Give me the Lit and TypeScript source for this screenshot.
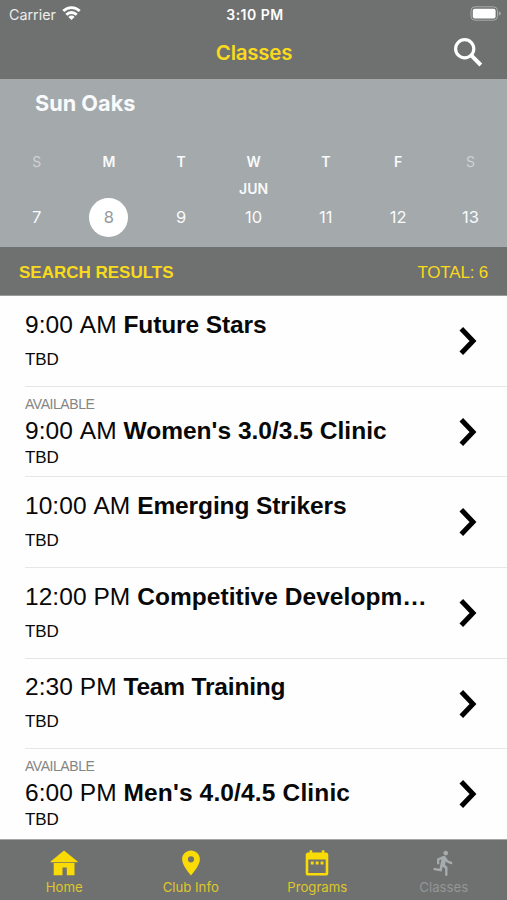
import { LitElement, html, css, svg, nothing } from "lit";
import { customElement, property } from "lit/decorators.js";
import { classMap } from "lit/directives/class-map.js";
import { styleMap } from "lit/directives/style-map.js";

interface Session {
  time: string;
  name: string;
  place: string;
  tracking: number;
  available?: boolean;
}

const WEEK = [
  { letter: "S", date: 7, weekend: true },
  { letter: "M", date: 8, selected: true },
  { letter: "T", date: 9 },
  { letter: "W", date: 10, month: "JUN" },
  { letter: "T", date: 11 },
  { letter: "F", date: 12 },
  { letter: "S", date: 13, weekend: true },
];

const SESSIONS: Session[] = [
  { time: "9:00 AM", name: "Future Stars", place: "TBD", tracking: -0.1 },
  { time: "9:00 AM", name: "Women's 3.0/3.5 Clinic", place: "TBD", tracking: 0.02, available: true },
  { time: "10:00 AM", name: "Emerging Strikers", place: "TBD", tracking: -0.1 },
  { time: "12:00 PM", name: "Competitive Developm…", place: "TBD", tracking: 0.05 },
  { time: "2:30 PM", name: "Team Training", place: "TBD", tracking: -0.18 },
  { time: "6:00 PM", name: "Men's 4.0/4.5 Clinic", place: "TBD", tracking: 0.15, available: true },
];

const TABS = [
  {
    label: "Home",
    box: "0 0 28 28",
    icon: svg`<path d="M14 1.500 27.600 12.600v.7H.6v-.7z"/><path d="M3.700 14h20.800v12.200h-7.700V18.500h-4.300v7.700H3.700z"/>`,
  },
  {
    label: "Club Info",
    box: "0.700 0.700 22.600 22.600",
    icon: svg`<path d="M12 2C8.130 2 4.800 5.130 4.800 9c0 5.250 7.200 13 7.200 13s7.200-7.750 7.200-13c0-3.870-3.330-7-7.200-7zm0 9.500a2.500 2.500 0 110-5 2.500 2.500 0 010 5z"/>`,
  },
  {
    label: "Programs",
    box: "0 0 28 28",
    icon: svg`<path fill-rule="evenodd" d="M6.600 1.200h2.600v2.200h9.600V1.200h2.600v2.200h1.300a2.600 2.600 0 0 1 2.600 2.600v17.900a2.600 2.600 0 0 1-2.600 2.600H5.300a2.600 2.600 0 0 1-2.600-2.600V6a2.600 2.600 0 0 1 2.600-2.600h1.300zM5.300 10.500V24h17.400V10.500z"/><path d="M7.800 12.500h2.900v2.900H7.800zM12.700 12.500h2.900v2.900h-2.900zM17.600 12.500h2.900v2.900h-2.900z"/>`,
  },
  {
    label: "Classes",
    box: "0 0 24 24",
    current: true,
    icon: svg`<path d="M13.490 5.480c1.100 0 2-.9 2-2s-.9-2-2-2-2 .9-2 2 .9 2 2 2zm-3.600 13.900l1-4.400 2.100 2v6h2v-7.500l-2.100-2 .6-3c1.300 1.500 3.300 2.500 5.500 2.500v-2c-1.900 0-3.500-1-4.300-2.400l-1-1.600c-.4-.6-1-1-1.700-1-.3 0-.5.1-.8.1l-5.200 2.200v4.700h2v-3.400l1.800-.7-1.600 8.100-4.900-1-.4 2 7 1.400z"/>`,
  },
];

@customElement("class-row")
class ClassRow extends LitElement {
  @property({ attribute: false }) session!: Session;

  static styles = css`
    :host {
      display: flex;
      align-items: center;
      flex: 1 1 0;
      min-height: 0;
      box-sizing: border-box;
      padding-left: 25px;
      padding-right: 29px;
      color: #080808;
      white-space: nowrap;
    }
    .text {
      flex: 1;
      align-self: stretch;
      padding-top: 13.500px;
    }
    .text.tagged {
      padding-top: 9px;
    }
    .tag {
      font-size: 14px;
      line-height: 17px;
      letter-spacing: -0.450px;
      color: #858585;
    }
    .title {
      font-size: 24.500px;
      line-height: 30px;
    }
    .time {
      font-kerning: none;
      letter-spacing: 0.050px;
    }
    .tagged .title {
      line-height: 36px;
    }
    .place {
      font-size: 17px;
      line-height: 20px;
      letter-spacing: -0.100px;
      margin-top: 10px;
    }
    .tagged .place {
      margin-top: 0;
      line-height: 17px;
    }
    .chevron {
      width: 20px;
      height: 30px;
      fill: none;
      stroke: #000;
      stroke-width: 5;
    }
  `;

  render() {
    const s = this.session;
    return html`
      <div class=${classMap({ text: true, tagged: !!s.available })}>
        ${s.available ? html`<div class="tag">AVAILABLE</div>` : nothing}
        <div class="title"><span class="time">${s.time} </span><b style=${styleMap({ letterSpacing: `${s.tracking}px` })}>${s.name}</b></div>
        <div class="place">${s.place}</div>
      </div>
      <svg class="chevron" viewBox="0 0 20 30"><path d="M3.300 2.700 15 15 3.300 27.300" /></svg>
    `;
  }
}

@customElement("app-root")
class AppRoot extends LitElement {
  static styles = css`
    :host {
      display: flex;
      flex-direction: column;
      height: 900px;
      overflow: hidden;
      background: #fefefe;
      font-family: "Liberation Sans", Arial, sans-serif;
    }
    .header {
      height: 79px;
      background: #6f7170;
      color: #fff;
      font-family: Inter, sans-serif;
    }
    .status,
    .nav {
      display: grid;
      grid-template-columns: 1fr auto 1fr;
      align-items: center;
    }
    .status {
      height: 28px;
      padding: 0 6px 0 9px;
      font-size: 14.300px;
    }
    .carrier {
      display: flex;
      align-items: center;
      gap: 6px;
      color: #ececec;
    }
    .wifi {
      width: 19px;
      height: 14px;
      margin-top: -2px;
    }
    .clock {
      font-weight: 600;
      font-size: 14px;
      letter-spacing: 0.500px;
    }
    .battery {
      justify-self: end;
      width: 31px;
      height: 15px;
      margin-top: -1px;
    }
    .nav {
      height: 48px;
      padding: 0 24px;
    }
    .heading {
      grid-column: 2;
      color: #f9da1c;
      font-size: 20.500px;
      font-weight: 600;
      letter-spacing: -0.250px;
      padding-left: 1px;
    }
    .search {
      justify-self: end;
      width: 30px;
      height: 30px;
      fill: none;
      stroke: #fff;
    }
    .calendar {
      height: 168px;
      background: #a4a9ac;
      color: #f8fafb;
      font-family: Inter, sans-serif;
    }
    .club {
      padding: 9px 35px 0;
      font-size: 21.700px;
      line-height: 30px;
      font-weight: 700;
    }
    .week {
      display: grid;
      grid-template-columns: repeat(7, 72.300px);
      margin: 33px 0 0 0.500px;
    }
    .day {
      display: grid;
      grid-template-rows: 20px 34px auto;
      justify-items: center;
      align-items: center;
    }
    .letter,
    .month {
      font-size: 14px;
      font-weight: 600;
    }
    .weekend .letter {
      color: #ced2d4;
      font-weight: 400;
    }
    .date {
      width: 39px;
      line-height: 39px;
      margin-top: -7px;
      border-radius: 50%;
      text-align: center;
      font-size: 16.500px;
    }
    .selected .date {
      background: #fff;
      color: #96999b;
    }
    .summary {
      display: flex;
      justify-content: space-between;
      align-items: center;
      height: 49px;
      box-sizing: border-box;
      padding: 3px 19px 0;
      border-bottom: 1px solid #999b9a;
      background: #6f7170;
      color: #f9da1c;
      font-size: 17px;
    }
    .total {
      letter-spacing: -0.200px;
    }
    .list {
      flex: 1;
      min-height: 0;
      display: flex;
      flex-direction: column;
    }
    .rule {
      height: 1px;
      flex: none;
      margin-left: 25px;
      background: #e6e6e6;
    }
    .tabs {
      display: grid;
      grid-template-columns: repeat(4, 126.500px);
      height: 61px;
      box-sizing: border-box;
      padding-left: 1px;
      border-top: 1px solid #a4a5a5;
      background: #6f7170;
      font-family: Inter, sans-serif;
    }
    .tab {
      display: flex;
      flex-direction: column;
      align-items: center;
      padding-top: 9px;
      color: #dfc72a;
      fill: #fadb05;
      font-size: 13.200px;
      line-height: 20px;
    }
    .tab.current {
      color: #929696;
      fill: #a6abae;
    }
    .glyph {
      width: 28px;
      height: 28px;
    }
  `;

  render() {
    return html`
      <header class="header">
        <div class="status">
          <div class="carrier">
            Carrier
            <svg class="wifi" viewBox="0 0 19 14" fill="none" stroke="#fff" stroke-width="2.800">
              <path d="M1.300 5.100a11.600 11.600 0 0 1 16.400 0M4.300 8.700a7.300 7.300 0 0 1 10.400 0" />
              <path d="M9.500 14 6.400 10.900a4.400 4.400 0 0 1 6.200 0z" fill="#fff" stroke="none" />
            </svg>
          </div>
          <div class="clock">3:10 PM</div>
          <svg class="battery" viewBox="0 0 31 15">
            <rect x="1" y="0.800" width="26.500" height="13.400" rx="4" fill="none" stroke="#a9abaa" />
            <rect x="2.800" y="2.700" width="22.800" height="9.700" rx="2" fill="#fff" />
            <path d="M28.800 5.300q2 .9 2 2.200t-2 2.200z" fill="#a9abaa" />
          </svg>
        </div>
        <div class="nav">
          <div class="heading">Classes</div>
          <svg class="search" viewBox="0 0 30 30">
            <circle cx="11.700" cy="11.700" r="9.100" stroke-width="3.200" />
            <path d="M18 18.200 27.800 28" stroke-width="4" />
          </svg>
        </div>
      </header>
      <section class="calendar">
        <div class="club">Sun Oaks</div>
        <div class="week">
          ${WEEK.map(
            (d) => html`<div class=${classMap({ day: true, weekend: !!d.weekend, selected: !!d.selected })}>
              <span class="letter">${d.letter}</span>
              <span class="month">${d.month ?? ""}</span>
              <span class="date">${d.date}</span>
            </div>`
          )}
        </div>
      </section>
      <div class="summary">
        <b>SEARCH RESULTS</b>
        <span class="total">TOTAL: ${SESSIONS.length}</span>
      </div>
      <main class="list">
        ${SESSIONS.map(
          (s, i) => html`${i ? html`<div class="rule"></div>` : nothing}<class-row .session=${s}></class-row>`
        )}
      </main>
      <nav class="tabs">
        ${TABS.map(
          (t) => html`<div class=${classMap({ tab: true, current: !!t.current })}>
            <svg class="glyph" viewBox=${t.box}>${t.icon}</svg>
            <span>${t.label}</span>
          </div>`
        )}
      </nav>
    `;
  }
}
